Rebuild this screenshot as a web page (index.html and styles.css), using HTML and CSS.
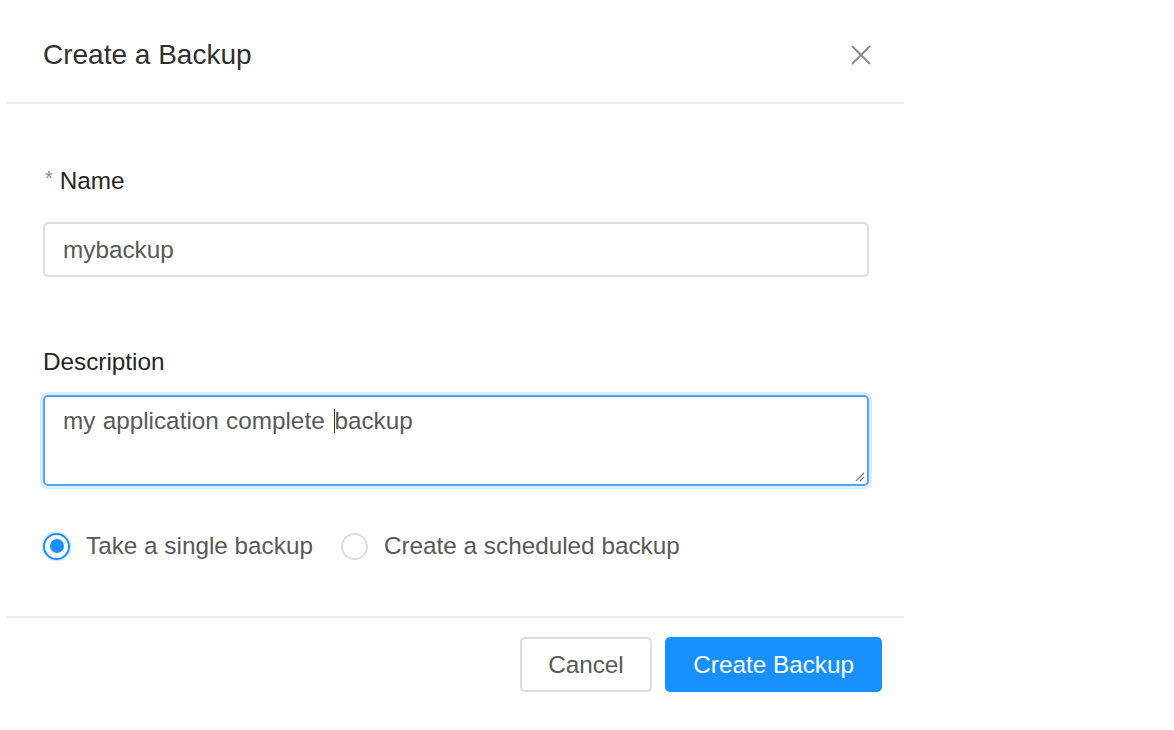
FILE: index.html
```html
<!DOCTYPE html>
<html lang="en">
<head>
<meta charset="utf-8">
<title>Create a Backup</title>
<link rel="stylesheet" href="styles.css">
</head>
<body>
<div class="modal">
  <div class="modal-header">
    <div class="modal-title">Create a Backup</div>
    <button class="modal-close" type="button" aria-label="Close">
      <svg width="20" height="20" viewBox="0 0 20 20"><path d="M1 1 L19 19 M19 1 L1 19" stroke="#8c8c8c" stroke-width="2" fill="none"/></svg>
    </button>
  </div>
  <div class="modal-body">
    <div class="form-item">
      <label class="form-label"><span class="required">*</span>Name</label>
      <input class="text-input" type="text" value="mybackup">
    </div>
    <div class="form-item form-item-desc">
      <label class="form-label">Description</label>
      <div class="textarea">my application complete <span class="caret"></span>backup<span class="grip"><svg width="12" height="12" viewBox="0 0 12 12"><path d="M11 3 L3 11 M11 7 L7 11" stroke="#777" stroke-width="1.2" fill="none"/></svg></span></div>
    </div>
    <div class="radio-group">
      <label class="radio"><span class="radio-circle checked"></span><span class="radio-text">Take a single backup</span></label>
      <label class="radio"><span class="radio-circle"></span><span class="radio-text">Create a scheduled backup</span></label>
    </div>
  </div>
  <div class="modal-footer">
    <button class="btn" type="button">Cancel</button>
    <button class="btn btn-primary" type="button">Create Backup</button>
  </div>
</div>
</body>
</html>
```

FILE: styles.css
```css
html, body {
  margin: 0;
  padding: 0;
  background: #ffffff;
}
body {
  font-family: "Liberation Sans", Arial, sans-serif;
  font-size: 24.3px;
  color: #595959;
}
.modal {
  width: 898px;
  margin: 8px 0 0 6px;
  background: #fff;
}
.modal-header {
  display: flex;
  align-items: center;
  justify-content: space-between;
  padding: 28px 33px 28px 36px;
  border-bottom: 2px solid #f0f0f0;
}
.modal-title {
  font-size: 28px;
  line-height: 38px;
  color: #303030;
  margin-left: 1px;
}
.modal-close {
  width: 20px;
  height: 20px;
  padding: 0;
  border: 0;
  background: transparent;
  display: flex;
}
.modal-body {
  padding: 58px 35px 51px 37px;
}
.form-label {
  display: block;
  line-height: 38px;
  color: #262626;
}
.required {
  color: #8c8c8c;
  font-size: 20px;
  margin-right: 7px;
  margin-left: 2px;
  position: relative;
  top: -4px;
}
.text-input {
  display: block;
  box-sizing: border-box;
  width: 826px;
  height: 55px;
  margin-top: 21px;
  padding: 0 18px;
  border: 2px solid #dedede;
  border-radius: 5px;
  font-family: "Liberation Sans", Arial, sans-serif;
  font-size: 24.3px;
  color: #595959;
  outline: none;
}
.form-item-desc {
  margin-top: 66px;
}
.textarea {
  position: relative;
  box-sizing: border-box;
  width: 826px;
  height: 91px;
  margin-top: 14px;
  padding: 5px 18px;
  border: 2px solid #4aa8ff;
  border-radius: 5px;
  box-shadow: 0 0 0 3px rgba(24, 144, 255, 0.15);
  line-height: 38px;
  color: #595959;
  word-spacing: 0.5px;
}
.caret {
  display: inline-block;
  width: 0;
  height: 24px;
  border-left: 1.5px solid #333;
  margin-left: 2px;
  margin-right: -0.5px;
  vertical-align: -4px;
}
.grip {
  position: absolute;
  right: 2px;
  bottom: 2px;
  width: 12px;
  height: 12px;
  display: flex;
}
.radio-group {
  display: flex;
  align-items: center;
  margin-top: 41px;
  gap: 28px;
}
.radio {
  display: flex;
  align-items: center;
  gap: 16px;
  line-height: 38px;
}
.radio-circle {
  box-sizing: border-box;
  width: 27px;
  height: 27px;
  border: 2px solid #dcdcdc;
  border-radius: 50%;
  display: flex;
  align-items: center;
  justify-content: center;
}
.radio-circle.checked {
  border-color: #1890ff;
  box-shadow: 0 0 0 1.5px rgba(24, 144, 255, 0.18);
}
.radio-circle.checked::after {
  content: "";
  width: 14px;
  height: 14px;
  border-radius: 50%;
  background: #1890ff;
}
.radio-text {
  color: #595959;
}
.modal-footer {
  display: flex;
  justify-content: flex-end;
  gap: 13px;
  padding: 19px 22px 18px;
  border-top: 2px solid #f0f0f0;
}
.btn {
  box-sizing: border-box;
  height: 55px;
  padding: 0 26.5px;
  border: 2px solid #dcdcdc;
  border-radius: 5px;
  background: #fff;
  font-family: "Liberation Sans", Arial, sans-serif;
  font-size: 24.3px;
  color: #595959;
}
.btn-primary {
  background: #1890ff;
  border-color: #1890ff;
  color: #fff;
  padding: 0 26px;
}
```
